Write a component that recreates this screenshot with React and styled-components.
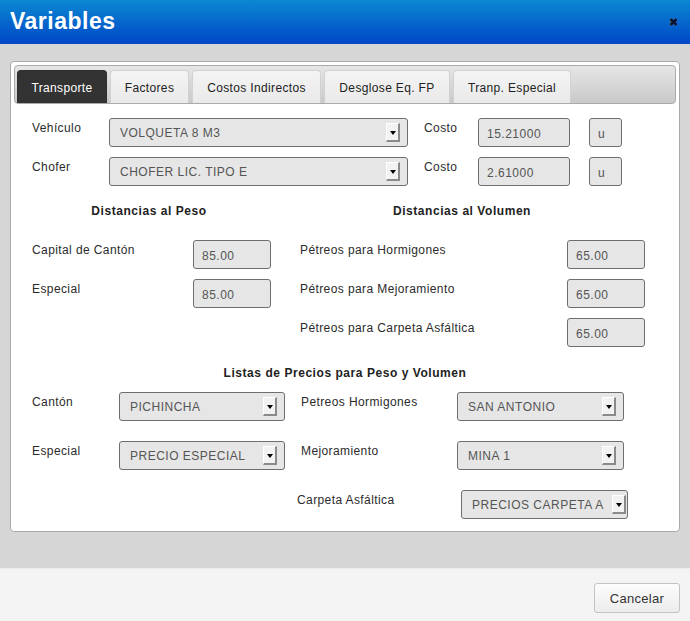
import React from "react";
import styled, { createGlobalStyle } from "styled-components";

const Global = createGlobalStyle`
  html, body { margin: 0; padding: 0; }
  body { font-family: "Liberation Sans", Arial, sans-serif; background: #d6d6d6; }
`;

const Dialog = styled.div`
  width: 690px;
  height: 621px;
  display: flex;
  flex-direction: column;
  overflow: hidden;
`;

const Header = styled.div`
  height: 44px;
  flex-shrink: 0;
  background: linear-gradient(#0b88d2, #0046c7);
  display: flex;
  align-items: center;
  justify-content: space-between;
  padding: 0 12px 0 10px;
  box-sizing: border-box;
`;

const Title = styled.h1`
  margin: 0;
  color: #fff;
  font-size: 23px;
  font-weight: bold;
  letter-spacing: 0.5px;
  line-height: 1;
  margin-top: -2px;
`;

const Close = styled.span`
  color: #0a1430;
  font-size: 11px;
  font-weight: bold;
  text-shadow: 0 0 1px #5a8fd8;
  line-height: 1;
`;

const Body = styled.div`
  flex: 1;
  background: #d6d6d6;
  padding: 17px 10px 0;
`;

const Panel = styled.div`
  background: #fff;
  border: 1px solid #aaa;
  border-radius: 4px;
  padding: 3px;
  height: 471px;
  box-sizing: border-box;
`;

const TabBar = styled.div`
  height: 39px;
  box-sizing: border-box;
  border: 1px solid #aaa;
  border-radius: 4px;
  background: linear-gradient(#e6e6e6, #c9c9c9);
  display: flex;
  align-items: flex-end;
  gap: 3px;
  padding: 0 2px;
  overflow: hidden;
`;

const Tab = styled.div`
  height: 34px;
  box-sizing: border-box;
  width: ${(p) => p.$w}px;
  display: flex;
  align-items: center;
  justify-content: center;
  font-size: 12px;
  letter-spacing: 0.35px;
  border-radius: 4px 4px 0 0;
  border: 1px solid ${(p) => (p.$active ? "#2e2e2e" : "#d2d2d2")};
  border-bottom: none;
  color: ${(p) => (p.$active ? "#fff" : "#222")};
  background: ${(p) => (p.$active ? "#333" : "linear-gradient(#f4f4f4, #e9e9e9)")};
  margin-bottom: -1px;
`;

const Content = styled.div`
  padding: 14px 18px 0;
`;

const TopGrid = styled.div`
  display: grid;
  grid-template-columns: 77px 299px 70px 92px 52px;
  grid-auto-rows: 29px;
  row-gap: 10px;
`;

const Label = styled.div`
  font-size: 12px;
  letter-spacing: 0.4px;
  color: #2b2b2b;
  padding-top: 3px;
  padding-left: ${(p) => p.$indent || 0}px;
  white-space: nowrap;
`;

const SelectBox = styled.div`
  width: ${(p) => p.$w}px;
  height: 29px;
  box-sizing: border-box;
  margin-left: ${(p) => p.$ml || 0}px;
  border: 1px solid #6e6e6e;
  border-radius: 3px;
  background: #e6e6e6;
  display: flex;
  align-items: center;
  padding-left: 10px;
  padding-right: ${(p) => (p.$pr !== undefined ? p.$pr : 7)}px;
  overflow: hidden;
`;

const SelectText = styled.span`
  flex: 1;
  min-width: 0;
  white-space: nowrap;
  font-size: 12px;
  letter-spacing: 0.5px;
  color: #555;
  padding-top: 1px;
`;

const DropButton = styled.span`
  flex-shrink: 0;
  width: 14px;
  height: 19px;
  box-sizing: border-box;
  background: #f2f2f2;
  border-top: 1px solid #fff;
  border-left: 1px solid #fff;
  border-right: 2px solid #8a8a8a;
  border-bottom: 2px solid #8a8a8a;
  display: flex;
  align-items: center;
  justify-content: center;
  &::after {
    content: "";
    width: 0;
    height: 0;
    border-left: 3px solid transparent;
    border-right: 3px solid transparent;
    border-top: 4px solid #000;
    margin-top: 1px;
  }
`;

const Field = styled.div`
  width: ${(p) => p.$w}px;
  height: 29px;
  box-sizing: border-box;
  margin-left: ${(p) => p.$ml || 0}px;
  border: 1px solid #6e6e6e;
  border-radius: 3px;
  background: #e6e6e6;
  display: flex;
  align-items: center;
  padding-left: 8px;
  padding-top: 2px;
  font-size: 12px;
  letter-spacing: 0.5px;
  color: #555;
`;

const HeadGrid = styled.div`
  display: grid;
  grid-template-columns: 234px 392px;
  margin-top: 18px;
`;

const Heading = styled.div`
  font-size: 12px;
  font-weight: bold;
  letter-spacing: 0.55px;
  color: #222;
  text-align: center;
  line-height: 14px;
  margin-top: ${(p) => p.$mt || 0}px;
`;

const DistGrid = styled.div`
  display: grid;
  grid-template-columns: 161px 78px 296px 78px;
  grid-auto-rows: 29px;
  row-gap: 10px;
  margin-top: 22px;
`;

const Empty = styled.div``;

const PriceGrid = styled.div`
  display: grid;
  grid-template-columns: 87px 166px 172px 167px;
  grid-auto-rows: 29px;
  row-gap: 20px;
  margin-top: 12px;
`;

const LastRow = styled.div`
  display: flex;
  align-items: flex-start;
  height: 29px;
  padding-left: 265px;
  margin-top: 20px;
`;

const FixedLabel = styled(Label)`
  width: 164px;
  flex-shrink: 0;
  box-sizing: border-box;
  padding-top: 3px;
`;

const Footer = styled.div`
  height: 53px;
  flex-shrink: 0;
  box-sizing: border-box;
  background: #f4f4f4;
  border-top: 1px solid #ececec;
  display: flex;
  justify-content: flex-end;
  align-items: flex-start;
  padding: 14px 10px 0 0;
`;

const Button = styled.button`
  width: 86px;
  height: 30px;
  border: 1px solid #c3c3c3;
  border-radius: 3px;
  background: linear-gradient(#fdfdfd, #ececec);
  font-family: "Liberation Sans", Arial, sans-serif;
  font-size: 13px;
  letter-spacing: 0.3px;
  color: #333;
  padding: 0;
`;

const Select = ({ w, children, ml, pr }) => (
  <SelectBox $w={w} $ml={ml} $pr={pr}>
    <SelectText>{children}</SelectText>
    <DropButton />
  </SelectBox>
);

const tabs = [
  ["Transporte", 90],
  ["Factores", 79],
  ["Costos Indirectos", 129],
  ["Desglose Eq. FP", 126],
  ["Tranp. Especial", 118],
];

export default function App() {
  return (
    <Dialog>
      <Global />
      <Header>
        <Title>Variables</Title>
        <Close>✖</Close>
      </Header>
      <Body>
        <Panel>
          <TabBar>
            {tabs.map(([t, w], i) => (
              <Tab key={t} $w={w} $active={i === 0}>
                {t}
              </Tab>
            ))}
          </TabBar>
          <Content>
            <TopGrid>
              <Label>Vehículo</Label>
              <Select w={299} pr={7}>VOLQUETA 8 M3</Select>
              <Label $indent={16}>Costo</Label>
              <Field $w={92}>15.21000</Field>
              <Field $w={33} $ml={19}>u</Field>
              <Label>Chofer</Label>
              <Select w={299} pr={7}>CHOFER LIC. TIPO E</Select>
              <Label $indent={16}>Costo</Label>
              <Field $w={92}>2.61000</Field>
              <Field $w={33} $ml={19}>u</Field>
            </TopGrid>

            <HeadGrid>
              <Heading>Distancias al Peso</Heading>
              <Heading>Distancias al Volumen</Heading>
            </HeadGrid>

            <DistGrid>
              <Label>Capital de Cantón</Label>
              <Field $w={78}>85.00</Field>
              <Label $indent={29}>Pétreos para Hormigones</Label>
              <Field $w={78}>65.00</Field>
              <Label>Especial</Label>
              <Field $w={78}>85.00</Field>
              <Label $indent={29}>Pétreos para Mejoramiento</Label>
              <Field $w={78}>65.00</Field>
              <Empty />
              <Empty />
              <Label $indent={29}>Pétreos para Carpeta Asfáltica</Label>
              <Field $w={78}>65.00</Field>
            </DistGrid>

            <Heading $mt={19}>Listas de Precios para Peso y Volumen</Heading>

            <PriceGrid>
              <Label>Cantón</Label>
              <Select w={166}>PICHINCHA</Select>
              <Label $indent={16}>Petreos Hormigones</Label>
              <Select w={167}>SAN ANTONIO</Select>
              <Label>Especial</Label>
              <Select w={166}>PRECIO ESPECIAL</Select>
              <Label $indent={16}>Mejoramiento</Label>
              <Select w={167}>MINA 1</Select>
            </PriceGrid>

            <LastRow>
              <FixedLabel>Carpeta Asfáltica</FixedLabel>
              <Select w={167} pr={1}>PRECIOS CARPETA A</Select>
            </LastRow>
          </Content>
        </Panel>
      </Body>
      <Footer>
        <Button>Cancelar</Button>
      </Footer>
    </Dialog>
  );
}
